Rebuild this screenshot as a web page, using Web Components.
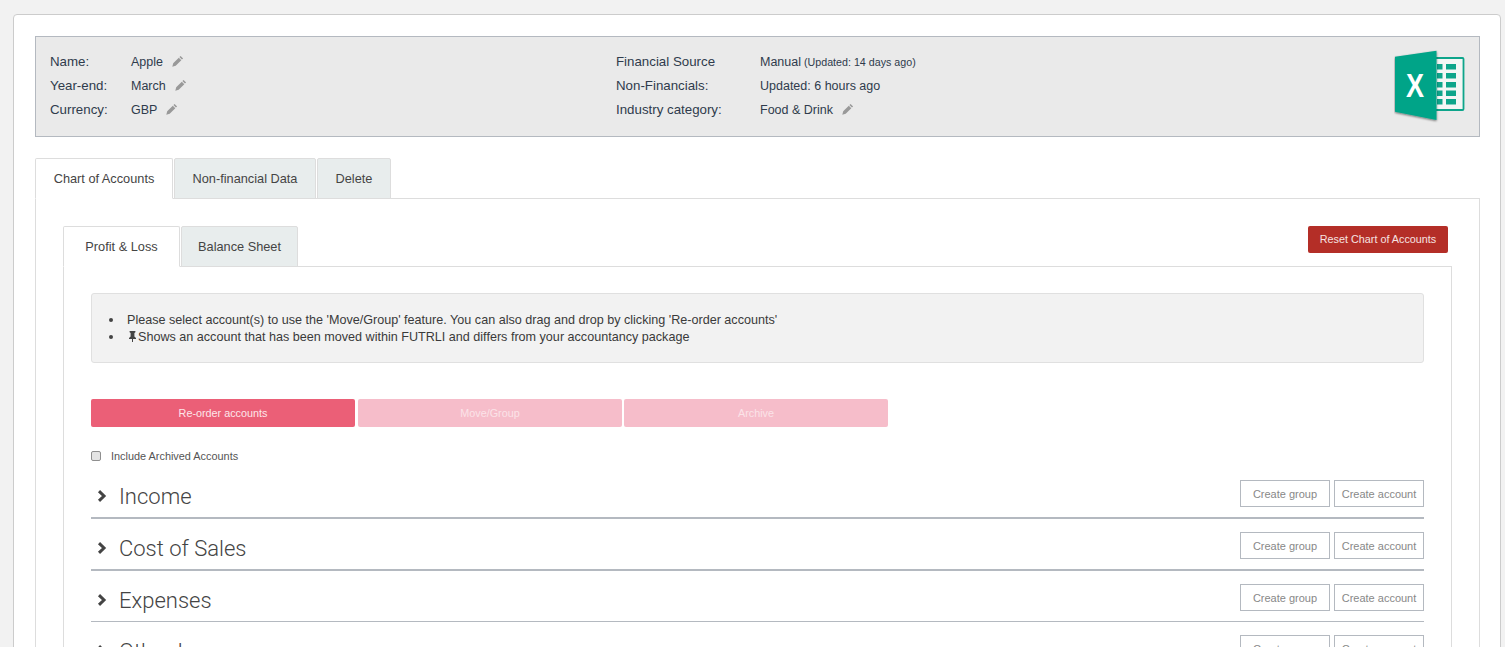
<!DOCTYPE html>
<html>
<head>
<meta charset="utf-8">
<style>
    html, body { height: 100%; }
    body {
        margin: 0;
        height: 647px;
        overflow: hidden;
        background: #f2f2f2;
        font-family: "Liberation Sans", Arial, sans-serif;
        color: #333;
    }
</style>
</head>
<body>
<app-card>
    <info-bar></info-bar>

    <tab-strip>
        <tab-item active width="138">Chart of Accounts</tab-item>
        <tab-item width="142">Non-financial Data</tab-item>
        <tab-item width="74">Delete</tab-item>
    </tab-strip>

    <outer-panel>
        <div style="display:flex;justify-content:space-between;align-items:flex-start;padding-right:4px;">
            <tab-strip>
                <tab-item active width="117">Profit &amp; Loss</tab-item>
                <tab-item width="117">Balance Sheet</tab-item>
            </tab-strip>
            <reset-button>Reset Chart of Accounts</reset-button>
        </div>
        <inner-panel>
            <notice-box></notice-box>
            <action-bar></action-bar>
            <archive-check>Include Archived Accounts</archive-check>
            <account-row>Income</account-row>
            <account-row>Cost of Sales</account-row>
            <account-row thin>Expenses</account-row>
            <account-row>Other Income</account-row>
        </inner-panel>
    </outer-panel>
</app-card>

<script>
const PENCIL = `<svg width="12" height="12" viewBox="0 0 12 12" style="display:block"><path fill="#999" d="M8.6.9l2.5 2.5-1.2 1.2-2.5-2.5zM6.8 2.7l2.5 2.5-5.6 5.6-3.4.9.9-3.4z"/></svg>`;

class AppCard extends HTMLElement {
    constructor() {
        super();
        this.attachShadow({ mode: "open" });
        this.shadowRoot.innerHTML = `
            <style>
                :host {
                    display: block;
                    box-sizing: border-box;
                    margin: 14px 4px 0 13px;
                    padding: 21px 20px 0 21px;
                    height: 700px;
                    background: #fff;
                    border: 1px solid #ccc;
                    border-radius: 4px;
                }
            </style>
            <slot></slot>
        `;
    }
}

class InfoBar extends HTMLElement {
    constructor() {
        super();
        this.attachShadow({ mode: "open" });
    }

    connectedCallback() {
        const editar = `<span class="edit">${PENCIL}</span>`;
        this.shadowRoot.innerHTML = `
            <style>
                :host {
                    display: flex;
                    box-sizing: border-box;
                    height: 101px;
                    margin-bottom: 21px;
                    padding: 12px 14px;
                    background: #eaeaea;
                    border: 1px solid #b4b9c0;
                    font-size: 13.3px;
                    color: #2f3b4c;
                }
                .grupo {
                    display: grid;
                    grid-auto-rows: 24px;
                    align-items: center;
                }
                .um { grid-template-columns: 81px auto; width: 566px; flex: none; align-content: start; }
                .dois { grid-template-columns: 144px auto; flex: 1; align-content: start; }
                .valor { display: flex; align-items: center; font-size: 12.5px; padding-top: 1px; }
                .edit { margin: -1px 0 0 9px; }
                small { font-size: 10.7px; margin-left: 3px; }
                .logo { flex: none; margin: 1px 0 0 0; }
            </style>
            <div class="grupo um">
                <span>Name:</span><span class="valor">Apple ${editar}</span>
                <span>Year-end:</span><span class="valor">March ${editar}</span>
                <span>Currency:</span><span class="valor">GBP ${editar}</span>
            </div>
            <div class="grupo dois">
                <span>Financial Source</span><span class="valor">Manual <small>(Updated: 14 days ago)</small></span>
                <span>Non-Financials:</span><span class="valor">Updated: 6 hours ago</span>
                <span>Industry category:</span><span class="valor">Food &amp; Drink ${editar}</span>
            </div>
            <svg class="logo" width="71" height="74" viewBox="0 0 71 74">
                <defs>
                    <filter id="sombra" x="-20%" y="-10%" width="140%" height="125%">
                        <feDropShadow dx="0" dy="1" stdDeviation="0.8" flood-color="#000" flood-opacity=".55"/>
                    </filter>
                </defs>
                <rect x="41" y="8" width="28.5" height="52" fill="#f4f6f5" stroke="#0ea58b" stroke-width="1.8" rx="1"/>
                <g fill="#0ea58b">
                    <rect x="43" y="14" width="5.5" height="5.5"/><rect x="52" y="14" width="10" height="5.5"/>
                    <rect x="43" y="23" width="5.5" height="5.5"/><rect x="52" y="23" width="10" height="5.5"/>
                    <rect x="43" y="32" width="5.5" height="5.5"/><rect x="52" y="32" width="10" height="5.5"/>
                    <rect x="43" y="40.5" width="5.5" height="5.5"/><rect x="52" y="40.5" width="10" height="5.5"/>
                    <rect x="43" y="49" width="5.5" height="5.5"/><rect x="52" y="49" width="10" height="5.5"/>
                </g>
                <path filter="url(#sombra)" fill="#03a488" d="M1 6.7L42.5 .7V70L1 61.7z"/>
                <text x="0" y="0" transform="translate(21 47) scale(.82 1)" text-anchor="middle" font-family="Liberation Sans" font-weight="700" font-size="33" fill="#fff">X</text>
            </svg>
        `;
    }
}

class TabStrip extends HTMLElement {
    constructor() {
        super();
        this.attachShadow({ mode: "open" });
        this.shadowRoot.innerHTML = `
            <style>
                :host {
                    display: flex;
                    gap: 1px;
                    position: relative;
                    z-index: 1;
                    margin-bottom: -1px;
                }
            </style>
            <slot></slot>
        `;
    }
}

class TabItem extends HTMLElement {
    constructor() {
        super();
        this.attachShadow({ mode: "open" });
    }

    connectedCallback() {
        const ativo = this.hasAttribute("active");
        this.shadowRoot.innerHTML = `
            <style>
                :host {
                    display: flex;
                    align-items: center;
                    justify-content: center;
                    box-sizing: border-box;
                    width: ${this.getAttribute("width")}px;
                    height: 41px;
                    font-size: 12.75px;
                    color: #444;
                    background: ${ativo ? "#fff" : "#e8eded"};
                    border: 1px solid #ddd;
                    border-bottom-color: ${ativo ? "#fff" : "#ddd"};
                    border-radius: 2px 2px 0 0;
                }
            </style>
            <slot></slot>
        `;
    }
}

class OuterPanel extends HTMLElement {
    constructor() {
        super();
        this.attachShadow({ mode: "open" });
        this.shadowRoot.innerHTML = `
            <style>
                :host {
                    display: block;
                    box-sizing: border-box;
                    height: 500px;
                    padding: 27px 27px 0 27px;
                    border: 1px solid #ddd;
                }
            </style>
            <slot></slot>
        `;
    }
}

class InnerPanel extends HTMLElement {
    constructor() {
        super();
        this.attachShadow({ mode: "open" });
        this.shadowRoot.innerHTML = `
            <style>
                :host {
                    display: block;
                    box-sizing: border-box;
                    height: 460px;
                    padding: 26px 27px 0 27px;
                    border: 1px solid #ddd;
                }
            </style>
            <slot></slot>
        `;
    }
}

class ResetButton extends HTMLElement {
    constructor() {
        super();
        this.attachShadow({ mode: "open" });
        this.shadowRoot.innerHTML = `
            <style>
                :host {
                    display: flex;
                    align-items: center;
                    justify-content: center;
                    box-sizing: border-box;
                    width: 140px;
                    height: 27px;
                    padding-bottom: 1px;
                    font-size: 10.8px;
                    color: #f6e3e1;
                    background: #b42e27;
                    border-radius: 2px;
                }
            </style>
            <slot></slot>
        `;
    }
}

class NoticeBox extends HTMLElement {
    constructor() {
        super();
        this.attachShadow({ mode: "open" });
        this.shadowRoot.innerHTML = `
            <style>
                :host {
                    display: block;
                    box-sizing: border-box;
                    height: 70px;
                    padding: 18px 15px 0 15px;
                    background: #f2f2f2;
                    border: 1px solid #e0e0e0;
                    border-radius: 3px;
                    font-size: 12.6px;
                    color: #3a3a3a;
                }
                ul { margin: 0; padding: 0 0 0 20px; list-style: none; }
                li { height: 17px; line-height: 17px; }
                li::before {
                    content: "";
                    display: inline-block;
                    width: 4px;
                    height: 4px;
                    margin: 0 14px 2px -18px;
                    border-radius: 50%;
                    background: #444;
                    vertical-align: middle;
                }
                svg { vertical-align: -1px; }
            </style>
            <ul>
                <li>Please select account(s) to use the 'Move/Group' feature. You can also drag and drop by clicking 'Re-order accounts'</li>
                <li><svg width="11" height="11" viewBox="0 0 11 11"><path fill="#444" d="M2.6 0h5.8v1.2L7.4 2v3.4L9 7v1H6v3L5.5 11.5 5 11V8H2V7l1.6-1.6V2L2.6 1.2z"/></svg>Shows an account that has been moved within FUTRLI and differs from your accountancy package</li>
            </ul>
        `;
    }
}

class ActionBar extends HTMLElement {
    constructor() {
        super();
        this.attachShadow({ mode: "open" });
        this.shadowRoot.innerHTML = `
            <style>
                :host {
                    display: flex;
                    gap: 2px;
                    margin-top: 36px;
                }
                div {
                    display: flex;
                    align-items: center;
                    justify-content: center;
                    width: 264px;
                    height: 28px;
                    border-radius: 2px;
                    font-size: 10.8px;
                    color: #fff;
                    background: #f6bdca;
                }
                .on { background: #eb5f77; color: #fde6ea; margin-right: 1px; }
                .off { color: #fbe3e8; }
            </style>
            <div class="on">Re-order accounts</div>
            <div class="off">Move/Group</div>
            <div class="off">Archive</div>
        `;
    }
}

class ArchiveCheck extends HTMLElement {
    constructor() {
        super();
        this.attachShadow({ mode: "open" });
        this.shadowRoot.innerHTML = `
            <style>
                :host {
                    display: flex;
                    align-items: center;
                    gap: 10px;
                    height: 20px;
                    margin: 19px 0 1px;
                    font-size: 10.9px;
                    color: #555;
                }
                i {
                    box-sizing: border-box;
                    width: 10px;
                    height: 10px;
                    margin-top: -1px;
                    border: 1px solid #8f8f8f;
                    border-radius: 2px;
                    background: #e4e4e4;
                }
            </style>
            <i></i><slot></slot>
        `;
    }
}

class AccountRow extends HTMLElement {
    constructor() {
        super();
        this.attachShadow({ mode: "open" });
    }

    connectedCallback() {
        const fino = this.hasAttribute("thin");
        this.shadowRoot.innerHTML = `
            <style>
                :host {
                    display: flex;
                    align-items: center;
                    box-sizing: border-box;
                    height: ${fino ? 51 : 52}px;
                    padding: 11px 0 8px 6px;
                    border-bottom: ${fino ? 1 : 2}px solid #b4b9c0;
                }
                .titulo {
                    flex: 1;
                    font-family: Roboto, "Liberation Sans", sans-serif;
                    font-size: 22px;
                    line-height: 1;
                    font-weight: 300;
                    color: #444;
                    margin: 7px 0 0 11px;
                }
                svg { display: block; margin-top: 4px; }
                .btn {
                    display: flex;
                    align-items: center;
                    justify-content: center;
                    box-sizing: border-box;
                    height: 27px;
                    padding-top: 1px;
                    border: 1px solid #b4b9c0;
                    font-size: 11px;
                    color: #888;
                    margin-left: 4px;
                    width: 90px;
                }
            </style>
            <svg width="11" height="12" viewBox="0 0 11 12"><path fill="none" stroke="#444" stroke-width="3" d="M2 1.2l5 4.8-5 4.8"/></svg>
            <span class="titulo"><slot></slot></span>
            <span class="btn">Create group</span>
            <span class="btn">Create account</span>
        `;
    }
}

customElements.define("app-card", AppCard);
customElements.define("info-bar", InfoBar);
customElements.define("tab-strip", TabStrip);
customElements.define("tab-item", TabItem);
customElements.define("outer-panel", OuterPanel);
customElements.define("inner-panel", InnerPanel);
customElements.define("reset-button", ResetButton);
customElements.define("notice-box", NoticeBox);
customElements.define("action-bar", ActionBar);
customElements.define("archive-check", ArchiveCheck);
customElements.define("account-row", AccountRow);
</script>
</body>
</html>
